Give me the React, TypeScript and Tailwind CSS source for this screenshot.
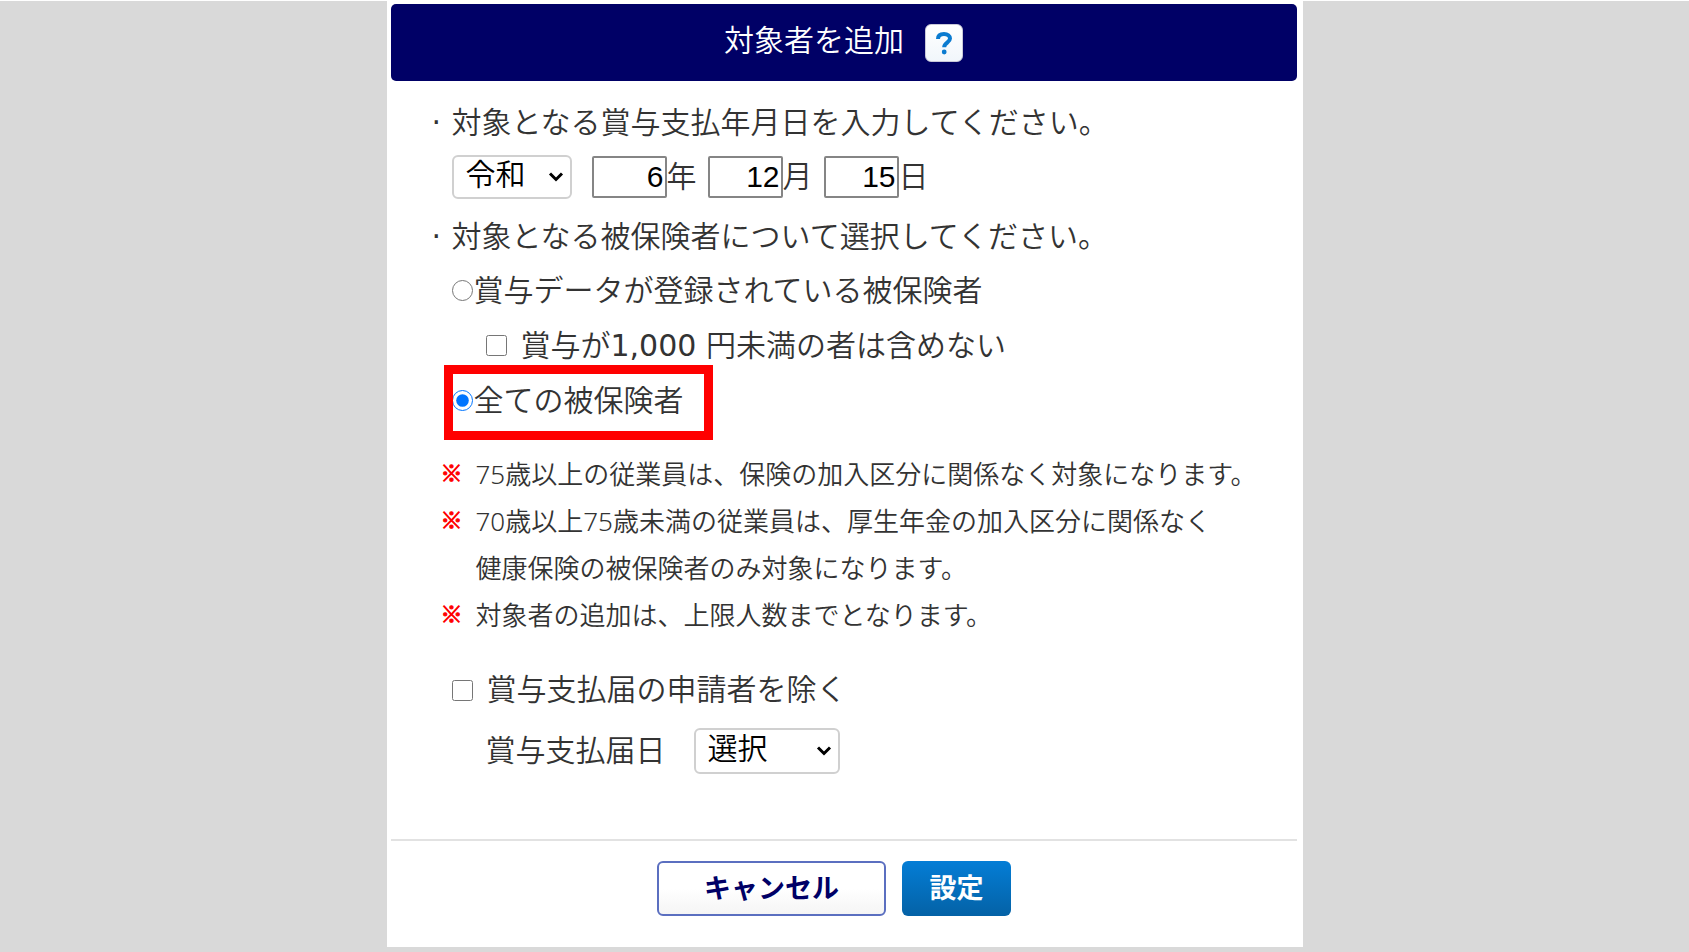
import type { ReactNode } from 'react'

const DATE_PARTS = [
  { id: 'year', unit: '年', value: '6' },
  { id: 'month', unit: '月', value: '12' },
  { id: 'day', unit: '日', value: '15' },
]

const NOTES = [
  ['75歳以上の従業員は、保険の加入区分に関係なく対象になります。'],
  ['70歳以上75歳未満の従業員は、厚生年金の加入区分に関係なく', '健康保険の被保険者のみ対象になります。'],
  ['対象者の追加は、上限人数までとなります。'],
]

function Prompt({ children }: { children: ReactNode }) {
  return (
    <h2 className="flex items-center pl-[41px]">
      <span className="w-5 font-normal">·</span>
      {children}
    </h2>
  )
}

function Select({ id, label, className, options }: { id: string; label: string; className: string; options: string[] }) {
  return (
    <div className={`relative ${className}`}>
      <select
        id={id}
        aria-label={label}
        className="block size-full appearance-none rounded-md border-2 border-[#d0d0d0] bg-white pb-1 pl-3 leading-9 text-black"
      >
        {options.map((option) => (
          <option key={option}>{option}</option>
        ))}
      </select>
      <svg
        className="pointer-events-none absolute top-1/2 right-2 h-[11px] w-4 -translate-y-1/2"
        viewBox="0 0 16 11"
        fill="none"
        stroke="black"
        strokeWidth="3"
      >
        <path d="M2 2l6 6 6-6" />
      </svg>
    </div>
  )
}

function DateFields() {
  return (
    <div className="flex h-[60px] items-center pl-[61px]">
      <Select id="era" label="元号" className="mr-5 h-11 w-[120px]" options={['令和', '平成']} />
      {DATE_PARTS.map((part) => (
        <label key={part.id} className="mr-[11px] flex items-center">
          <input
            type="text"
            defaultValue={part.value}
            className="h-[42px] w-[75px] rounded-xs border-2 border-[#858585] bg-white px-px text-right font-['Liberation_Sans',sans-serif] text-black"
          />
          {part.unit}
        </label>
      ))}
    </div>
  )
}

export default function App() {
  return (
    <main className="min-h-screen border-t border-white bg-[#d9d9d9] pb-[5px] font-['DejaVu_Sans','Noto_Sans_CJK_JP',sans-serif] text-[30px] leading-[48px] font-[350] text-[#333]">
      <form className="mx-auto w-full max-w-[916px] bg-white pt-[3px] pr-1.5 pl-1" lang="ja">
        <header className="flex h-[77px] items-center justify-center gap-[21px] rounded-[5px] bg-[#000066] text-white">
          <h1 className="pb-1">対象者を追加</h1>
          <button
            type="button"
            className="flex size-[38px] items-center justify-center rounded-md border border-[#c8c8d8] bg-gradient-to-b from-white to-[#f1f6fb]"
            aria-label="ヘルプ"
          >
            <svg className="h-6 w-[18px]" viewBox="0 0 18 24" fill="none" stroke="#0b7bd0">
              <path d="M3 8C3 4.500 5.300 3 9 3s6 1.800 6 4.600c0 4-5.800 4.200-5.800 8.600" strokeWidth="4" />
              <circle cx="9.200" cy="21" r="2.400" fill="#0b7bd0" stroke="none" />
            </svg>
          </button>
        </header>

        <section className="pt-[18px] pb-[54px]">
          <Prompt>対象となる賞与支払年月日を入力してください。</Prompt>
          <DateFields />
          <div className="h-14 pt-1.5">
            <Prompt>対象となる被保険者について選択してください。</Prompt>
          </div>

          <div className="pl-[61px]">
            <label className="flex h-[55px] items-center gap-px">
              <input type="radio" name="target" className="size-[21px]" />
              賞与データが登録されている被保険者
            </label>
            <label className="flex h-[55px] items-center gap-[14px] pl-[34px]">
              <input type="checkbox" className="size-[21px]" />
              <span>
                賞与が<span className="font-normal">1,000</span> 円未満の者は含めない
              </span>
            </label>
            <label className="relative flex h-[55px] w-fit items-center gap-px">
              <input type="radio" name="target" className="size-[21px] accent-[#0075ff]" defaultChecked />
              全ての被保険者
              {/* 強調枠 */}
              <span className="pointer-events-none absolute -top-2 -right-[29px] -bottom-3 -left-2 border-[9px] border-[#ff0000]" />
            </label>
          </div>

          <ul className="mt-[23px] pl-[50px] font-['Noto_Sans','Noto_Sans_CJK_JP',sans-serif] text-[26px] leading-[47px]">
            {NOTES.map((lines) => (
              <li key={lines[0]} className="flex">
                <span className="w-[35px] font-['Noto_Sans_CJK_JP',sans-serif] text-[22px] leading-10 font-bold text-[#ff0000] [-webkit-text-stroke:1px_#ff0000]">
                  ※
                </span>
                <p>
                  {lines.map((line) => (
                    <span key={line} className="block whitespace-nowrap">
                      {line}
                    </span>
                  ))}
                </p>
              </li>
            ))}
          </ul>

          <div className="mt-6 pl-[61px]">
            <label className="flex h-[54px] items-center gap-[14px]">
              <input type="checkbox" className="size-[21px]" />
              賞与支払届の申請者を除く
            </label>
            <div className="flex h-[68px] items-center gap-7 pl-[34px]">
              <label htmlFor="notice-date">賞与支払届日</label>
              <Select id="notice-date" label="賞与支払届日" className="h-[46px] w-[146px]" options={['選択']} />
            </div>
          </div>
        </section>

        <footer className="flex justify-center gap-4 border-t-2 border-[#e2e2e2] pt-5 pr-[19px] pb-[31px] text-[27px] font-bold">
          <button
            type="button"
            className="h-[55px] w-[229px] rounded-md border-2 border-[#5b6fc0] bg-gradient-to-b from-white from-50% to-[#f5f5f5] text-[#000066]"
          >
            キャンセル
          </button>
          <button
            type="submit"
            className="h-[55px] w-[109px] rounded-md bg-gradient-to-b from-[#047dd6] to-[#0462a6] text-white"
          >
            設定
          </button>
        </footer>
      </form>
    </main>
  )
}
